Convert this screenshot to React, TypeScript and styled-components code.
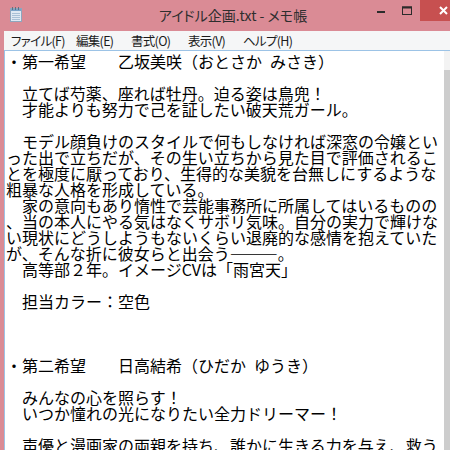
import { createGlobalStyle, styled } from 'styled-components';

const GlobalStyle = createGlobalStyle`
  html, body {
    margin: 0;
    padding: 0;
    background: #ffffff;
    overflow: hidden;
  }
`;

const Screen = styled.div`
  width: 450px;
  height: 450px;
  overflow: hidden;
`;

const Window = styled.div`
  width: 466px;
  height: 470px;
  background: #da8b95;
  display: flex;
  flex-direction: column;
  padding: 0 4px;
  box-sizing: border-box;
`;

const TitleBar = styled.div`
  height: 31px;
  margin: 0 -4px;
  display: flex;
  align-items: flex-start;
`;

const AppIcon = styled.svg`
  width: 12px;
  height: 15px;
  margin: 7px 0 0 10px;
  flex: none;
`;

const Title = styled.div`
  flex: 1;
  text-align: center;
  padding: 6px 0 0 76px;
  font-family: 'Noto Sans CJK JP', sans-serif;
  font-feature-settings: 'palt';
  font-size: 14px;
  line-height: 19px;
  color: #2e2e2e;
  white-space: nowrap;
`;

const Controls = styled.div`
  display: flex;
  align-items: flex-start;
  flex: none;
`;

const ControlButton = styled.div<{ $close?: boolean }>`
  width: ${({ $close }) => ($close ? '46px' : '26px')};
  height: 21px;
  display: flex;
  align-items: center;
  justify-content: center;
  background: ${({ $close }) => ($close ? '#c75050' : 'transparent')};
`;

const MenuBar = styled.div`
  height: 19px;
  background: #f5f6f7;
  display: flex;
  align-items: center;
`;

const MenuItem = styled.div<{ $w: number }>`
  width: ${({ $w }) => $w}px;
  padding-left: 7px;
  box-sizing: border-box;
  font-family: 'Noto Sans CJK JP', sans-serif;
  font-feature-settings: 'palt';
  font-size: 12.5px;
  letter-spacing: -0.7px;
  line-height: 19px;
  color: #1b1b1b;
  white-space: nowrap;
`;

const EditFrame = styled.div`
  flex: 1;
  display: flex;
  border: 1px solid #9cc3e6;
  border-bottom: none;
  background: #ffffff;
  min-height: 0;
`;

const TextArea = styled.div`
  flex: 1;
  padding: 2px 0 0 1px;
  overflow: hidden;
`;

const Line = styled.div`
  height: 16px;
  font-family: 'Noto Sans CJK JP', sans-serif;
  font-size: 16px;
  line-height: 16px;
  color: #000000;
  white-space: pre;
`;

const ScrollBar = styled.div`
  width: 17px;
  flex: none;
  display: flex;
  flex-direction: column;
  background: #f0f0f0;
`;

const ArrowButton = styled.div`
  height: 19px;
  background: #f3f3f3;
`;

const Thumb = styled.div`
  flex: 1;
  background: #cdcdcd;
`;

const menus = [
  { label: 'ファイル(F)', w: 65 },
  { label: '編集(E)', w: 55 },
  { label: '書式(O)', w: 57 },
  { label: '表示(V)', w: 55 },
  { label: 'ヘルプ(H)', w: 62 },
];

const lines = [
  '・第一希望　　乙坂美咲（おとさか\u2002みさき）',
  '',
  '　立てば芍薬、座れば牡丹。迫る姿は鳥兜！',
  '　才能よりも努力で己を証したい破天荒ガール。',
  '',
  '　モデル顔負けのスタイルで何もしなければ深窓の令嬢とい',
  'った出で立ちだが、その生い立ちから見た目で評価されるこ',
  'とを極度に厭っており、生得的な美貌を台無しにするような',
  '粗暴な人格を形成している。',
  '　家の意向もあり惰性で芸能事務所に所属してはいるものの',
  '、当の本人にやる気はなくサボリ気味。自分の実力で輝けな',
  'い現状にどうしようもないくらい退廃的な感情を抱えていた',
  'が、そんな折に彼女らと出会う―――。',
  '　高等部２年。イメージCVは「雨宮天」',
  '',
  '　担当カラー：空色',
  '',
  '',
  '',
  '・第二希望　　日高結希（ひだか\u2002ゆうき）',
  '',
  '　みんなの心を照らす！',
  '　いつか憧れの光になりたい全力ドリーマー！',
  '',
  '　声優と漫画家の両親を持ち、誰かに生きる力を与え、救う',
];

function NotepadIcon() {
  return (
    <AppIcon viewBox="0 0 12 15">
      <rect x="0.5" y="1.5" width="11" height="13" fill="#dfe9f3" stroke="#8ea6bd" />
      <rect x="1" y="2" width="10" height="2" fill="#7aa3c9" />
      <line x1="2" y1="6.5" x2="10" y2="6.5" stroke="#a9c0d6" />
      <line x1="2" y1="8.5" x2="10" y2="8.5" stroke="#a9c0d6" />
      <line x1="2" y1="10.5" x2="10" y2="10.5" stroke="#a9c0d6" />
      <line x1="2" y1="12.5" x2="10" y2="12.5" stroke="#a9c0d6" />
      <line x1="2.5" y1="0" x2="2.5" y2="3" stroke="#5f7180" />
      <line x1="5.5" y1="0" x2="5.5" y2="3" stroke="#5f7180" />
      <line x1="8.5" y1="0" x2="8.5" y2="3" stroke="#5f7180" />
    </AppIcon>
  );
}

export default function App() {
  return (
    <Screen>
      <GlobalStyle />
      <Window>
        <TitleBar>
          <NotepadIcon />
          <Title>アイドル企画.txt - メモ帳</Title>
          <Controls>
            <ControlButton>
              <svg width="8" height="8" viewBox="0 0 8 8">
                <rect x="0" y="4" width="8" height="2" fill="#2b2b2b" />
              </svg>
            </ControlButton>
            <ControlButton>
              <svg width="10" height="9" viewBox="0 0 10 9">
                <rect x="0.5" y="1" width="9" height="7.5" fill="none" stroke="#2b2b2b" />
                <rect x="0" y="0.5" width="10" height="2" fill="#2b2b2b" />
              </svg>
            </ControlButton>
            <ControlButton $close>
              <svg width="9" height="9" viewBox="0 0 9 9">
                <path d="M1 1 L8 8 M8 1 L1 8" stroke="#ffffff" strokeWidth="2" />
              </svg>
            </ControlButton>
          </Controls>
        </TitleBar>
        <MenuBar>
          {menus.map((m) => (
            <MenuItem key={m.label} $w={m.w}>
              {m.label}
            </MenuItem>
          ))}
        </MenuBar>
        <EditFrame>
          <TextArea>
            {lines.map((l, i) => (
              <Line key={i}>{l}</Line>
            ))}
          </TextArea>
          <ScrollBar>
            <ArrowButton />
            <Thumb />
          </ScrollBar>
        </EditFrame>
      </Window>
    </Screen>
  );
}
